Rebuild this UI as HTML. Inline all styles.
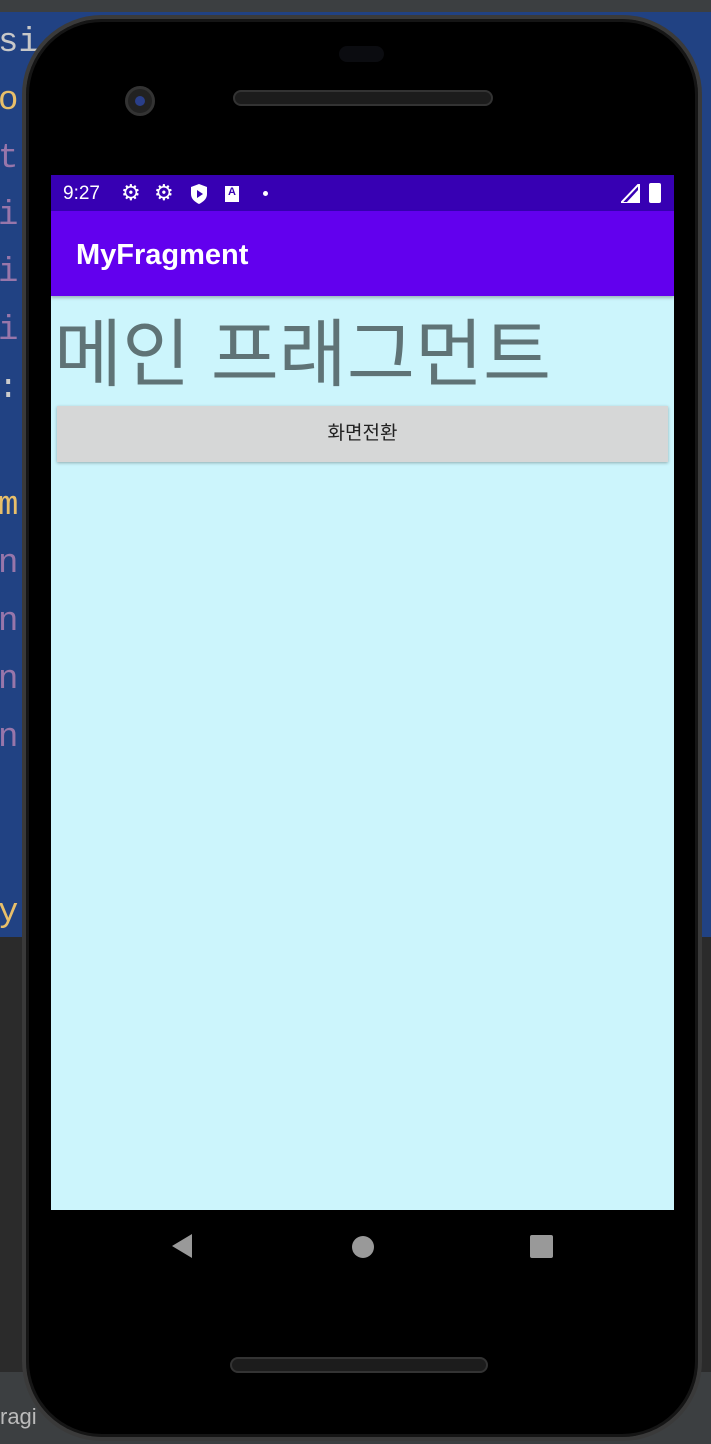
<!DOCTYPE html>
<html><head><meta charset="utf-8"><style>
*{margin:0;padding:0;box-sizing:border-box}
body{width:711px;height:1444px;position:relative;overflow:hidden;background:#2b2b2b;font-family:"Liberation Sans","Noto Sans CJK KR",sans-serif}
.ide{position:absolute;left:0;top:12px;width:711px;height:925px;background:#214283}
.topbar{position:absolute;left:0;top:0;width:711px;height:12px;background:#3c3f41}
.code{position:absolute;left:-2px;font-family:"Liberation Mono",monospace;font-size:34px;color:#9876aa;line-height:1}
.phone{position:absolute;left:22px;top:15px;width:680px;height:1426px;background:#000;border-radius:80px;border:4px solid #3a3a3a;box-shadow:inset 0 0 0 3px #151515}
.screen{position:absolute;left:51px;top:175px;width:623px;height:1035px;background:#ccf5fc}
.status{position:absolute;left:0;top:0;width:623px;height:36px;background:#3700b3;color:#fff;font-size:19px}
.appbar{position:absolute;left:0;top:36px;width:623px;height:85px;background:#6200ee;color:#fff;font-size:29px;font-weight:bold;padding:28px 0 0 25px;box-shadow:0 2px 3px rgba(0,0,0,.25)}
.title{position:absolute;left:3px;top:120px;font-size:74px;color:#5f7376;white-space:nowrap}
.btn{position:absolute;left:6px;top:231px;width:611px;height:56px;background:#d6d7d7;box-shadow:0 1px 3px rgba(0,0,0,.3);font-size:19px;color:#222;text-align:center;line-height:56px}
</style></head><body>
<div class="topbar"></div>
<div class="ide"></div>
<div class="code" style="top:26px;color:#c8c8c8">si</div>
<div class="code" style="top:84px;color:#e8bf6a">o</div>
<div class="code" style="top:142px">t</div>
<div class="code" style="top:199px">i</div>
<div class="code" style="top:256px">i</div>
<div class="code" style="top:314px">i</div>
<div class="code" style="top:372px;color:#ccc">:</div>
<div class="code" style="top:489px;color:#e8bf6a">m</div>
<div class="code" style="top:547px">n</div>
<div class="code" style="top:605px">n</div>
<div class="code" style="top:663px">n</div>
<div class="code" style="top:721px">n</div>
<div class="code" style="top:896px;color:#e8bf6a">y</div>
<div style="position:absolute;left:0;top:1372px;width:711px;height:72px;background:#3c3f41"></div>
<div style="position:absolute;left:0;top:1404px;color:#bbb;font-size:22px">ragi</div>
<div class="phone"></div>
<div style="position:absolute;left:339px;top:46px;width:45px;height:16px;border-radius:8px;background:#0b0c10"></div>
<div style="position:absolute;left:125px;top:86px;width:30px;height:30px;border-radius:50%;background:#222;border:3px solid #333"><div style="margin:7px;width:10px;height:10px;border-radius:50%;background:#2a3f8a"></div></div>
<div style="position:absolute;left:233px;top:90px;width:260px;height:16px;border-radius:8px;background:#1c1c1c;border:2px solid #333"></div>
<div class="screen">
<div class="status"><span style="position:absolute;left:12px;top:8px">9:27</span>
<span style="position:absolute;left:70px;top:5px;font-size:22px">⚙</span>
<span style="position:absolute;left:103px;top:5px;font-size:22px">⚙</span>
<svg style="position:absolute;left:139px;top:9px" width="18" height="20" viewBox="0 0 18 20"><path d="M9 0L17 3V10C17 15 13 18 9 20C5 18 1 15 1 10V3Z" fill="#fff"/><path d="M7 6L13 10L7 14Z" fill="#3700b3"/></svg>
<div style="position:absolute;left:174px;top:11px;width:14px;height:16px;background:#fff;color:#3700b3;font-size:11px;font-weight:bold;text-align:center">A</div>
<div style="position:absolute;left:212px;top:16px;width:5px;height:5px;border-radius:50%;background:#fff"></div>
<svg style="position:absolute;left:570px;top:9px" width="19" height="19"><path d="M18 0V19H0Z" fill="none" stroke="#fff" stroke-width="2"/><path d="M18 5V19H5Z" fill="#fff"/></svg>
<div style="position:absolute;left:598px;top:8px;width:12px;height:20px;background:#fff;border-radius:2px"></div>
</div>
<div class="appbar">MyFragment</div>
<div class="title">메인 프래그먼트</div>
<div class="btn">화면전환</div>
</div>
<svg style="position:absolute;left:170px;top:1233px" width="24" height="26"><path d="M22 1V25L2 13Z" fill="#999"/></svg>
<div style="position:absolute;left:352px;top:1236px;width:22px;height:22px;border-radius:50%;background:#999"></div>
<div style="position:absolute;left:530px;top:1235px;width:23px;height:23px;border-radius:2px;background:#999"></div>
<div style="position:absolute;left:230px;top:1357px;width:258px;height:16px;border-radius:8px;background:#1c1c1c;border:2px solid #333"></div>
</body></html>
